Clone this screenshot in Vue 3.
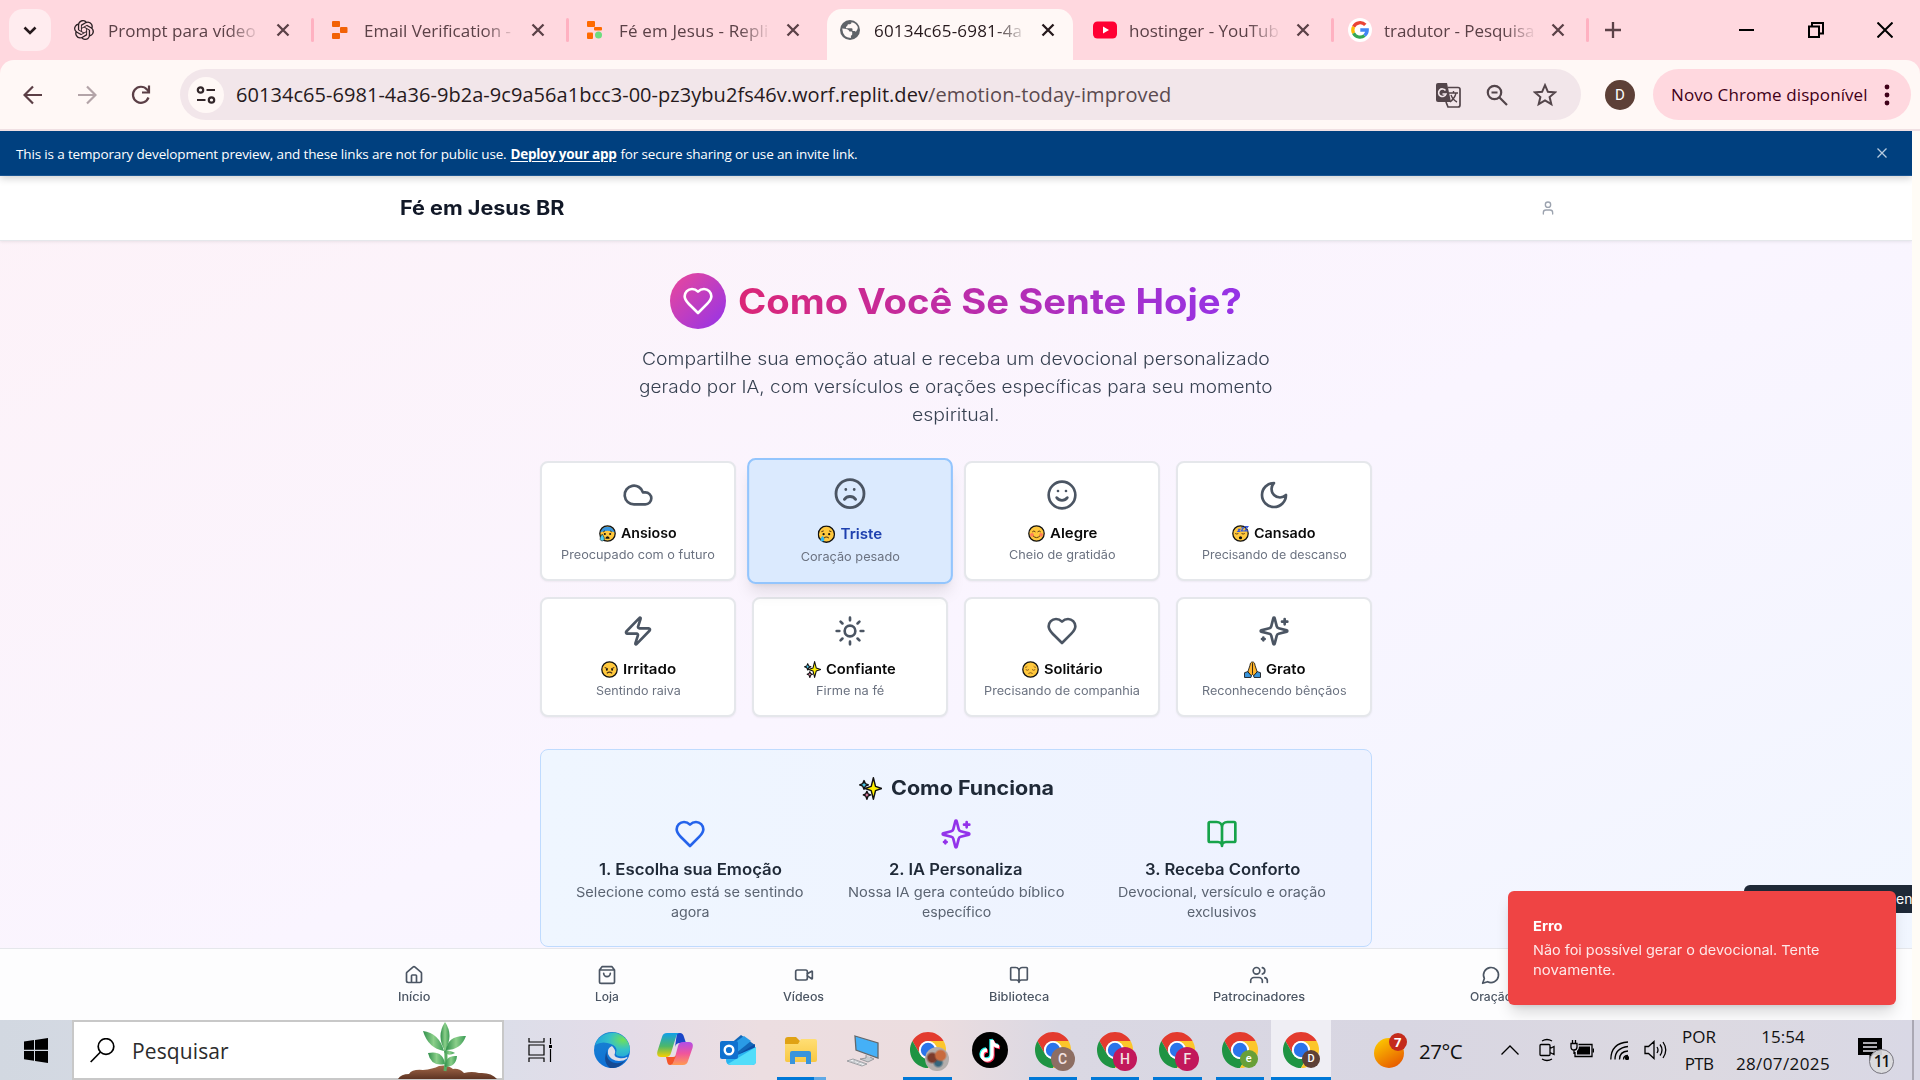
<script setup>
// Letter-spaces a run of text to a given width; with .wide the glyphs are widened instead.
const vFit = {
  mounted(el, { value, modifiers }) {
    const natural = el.offsetWidth
    if (modifiers.wide) {
      el.style.width = `${value}px`
      el.style.transform = `scaleX(${(value / natural).toFixed(4)})`
    } else {
      el.style.letterSpacing = `${((value - natural) / el.textContent.trim().length).toFixed(3)}px`
    }
  },
}

const tabs = [
  { icon: 'gpt', title: 'Prompt para vídeo', w: 148 },
  { icon: 'replit', title: 'Email Verification -', w: 147 },
  { icon: 'replit-live', title: 'Fé em Jesus - Repli', w: 150, quiet: true },
  { icon: 'globe', title: '60134c65-6981-4a', w: 148, active: true },
  { icon: 'youtube', title: 'hostinger - YouTub', w: 150 },
  { icon: 'google', title: 'tradutor - Pesquisa', w: 150 },
]
const emotions = [
  { icon: 'cloud', emoji: 'e-anxious', name: 'Ansioso', w: 56, desc: 'Preocupado com o futuro', dw: 154 },
  { icon: 'frown', emoji: 'e-sad', name: 'Triste', w: 40, desc: 'Coração pesado', dw: 95 },
  { icon: 'smile', emoji: 'e-happy', name: 'Alegre', w: 47, desc: 'Cheio de gratidão', dw: 107 },
  { icon: 'moon', emoji: 'e-sleep', name: 'Cansado', w: 62, desc: 'Precisando de descanso', dw: 145 },
  { icon: 'zap', emoji: 'e-angry', name: 'Irritado', w: 53, desc: 'Sentindo raiva', dw: 85 },
  { icon: 'sun', emoji: 'e-sparkles', name: 'Confiante', w: 70, desc: 'Firme na fé', dw: 68 },
  { icon: 'heart', emoji: 'e-lonely', name: 'Solitário', w: 59, desc: 'Precisando de companhia', dw: 156 },
  { icon: 'sparkles', emoji: 'e-pray', name: 'Grato', w: 39, desc: 'Reconhecendo bênçãos', dw: 145 },
]
const selected = 'Triste'
const steps = [
  { icon: 'heart', tone: 'blue', title: '1. Escolha sua Emoção', w: 183, lines: [['Selecione como está se sentindo', 228], ['agora', 39]] },
  { icon: 'sparkles', tone: 'purple', title: '2. IA Personaliza', w: 134, lines: [['Nossa IA gera conteúdo bíblico', 216], ['específico', 69]] },
  { icon: 'book', tone: 'green', title: '3. Receba Conforto', w: 155, lines: [['Devocional, versículo e oração', 208], ['exclusivos', 70]] },
]
const nav = [
  { icon: 'home', label: 'Início', w: 32 },
  { icon: 'bag', label: 'Loja', w: 24 },
  { icon: 'video', label: 'Vídeos', w: 41 },
  { icon: 'book', label: 'Biblioteca', w: 60 },
  { icon: 'users', label: 'Patrocinadores', w: 92 },
  { icon: 'message', label: 'Oração', w: 42 },
]
const apps = [
  { icon: 'edge' },
  { icon: 'copilot' },
  { icon: 'outlook' },
  { icon: 'folder', open: true, stacked: true },
  { icon: 'computer' },
  { icon: 'chrome', open: true, badge: ' ', tone: 'photo' },
  { icon: 'tiktok' },
  { icon: 'chrome', open: true, badge: 'C', tone: 'taupe' },
  { icon: 'chrome', open: true, badge: 'H', tone: 'magenta' },
  { icon: 'chrome', open: true, badge: 'F', tone: 'magenta' },
  { icon: 'chrome', open: true, badge: 'e', tone: 'lime small' },
  { icon: 'chrome', open: true, badge: 'D', tone: 'brown small', active: true },
]
</script>

<template>
  <div class="screen">
    <svg class="sprite" width="0" height="0">
      <defs>
        <radialGradient id="edgeGreen" cx=".8" cy=".3" r=".9"><stop offset="0" stop-color="#6fe05a" /><stop offset=".45" stop-color="#35c1c8" /><stop offset="1" stop-color="#1b9de2" /></radialGradient>
        <linearGradient id="edgeBlue" x1="0" y1="0" x2=".3" y2="1"><stop offset="0" stop-color="#1b86d0" /><stop offset="1" stop-color="#0d6fd6" /></linearGradient>
        <linearGradient id="copA" x1="0" y1="0" x2="0" y2="1"><stop offset="0" stop-color="#12a0e8" /><stop offset=".55" stop-color="#4cb76a" /><stop offset="1" stop-color="#f8d000" /></linearGradient>
        <linearGradient id="copB" x1="0" y1="0" x2="0" y2="1"><stop offset="0" stop-color="#b14ee8" /><stop offset=".5" stop-color="#f0559c" /><stop offset="1" stop-color="#ff9b52" /></linearGradient>
        <linearGradient id="folderG" x1="0" y1="0" x2="0" y2="1"><stop offset="0" stop-color="#ffde74" /><stop offset="1" stop-color="#f8c843" /></linearGradient>
        <linearGradient id="leaf" x1="0" y1="0" x2="1" y2="0"><stop offset="0" stop-color="#2f8f4b" /><stop offset=".5" stop-color="#8ccf8a" /><stop offset="1" stop-color="#3a9b55" /></linearGradient>
        <linearGradient id="soil" x1="0" y1="0" x2="0" y2="1"><stop offset="0" stop-color="#a5694a" /><stop offset="1" stop-color="#5d3423" /></linearGradient>
        <linearGradient id="sunG" x1="0" y1="0" x2=".6" y2="1"><stop offset="0" stop-color="#ffd400" /><stop offset="1" stop-color="#e85f00" /></linearGradient>
      </defs>
      <symbol id="cloud" viewBox="0 0 24 24"><path d="M17.5 19H9a7 7 0 1 1 6.71-9h1.79a4.5 4.5 0 1 1 0 9Z" /></symbol>
      <symbol id="frown" viewBox="0 0 24 24"><circle cx="12" cy="12" r="10" /><path d="M16 16s-1.5-2-4-2-4 2-4 2M9 9h.01M15 9h.01" /></symbol>
      <symbol id="smile" viewBox="0 0 24 24"><circle cx="12" cy="12" r="10" /><path d="M8 14s1.5 2 4 2 4-2 4-2M9 9h.01M15 9h.01" /></symbol>
      <symbol id="moon" viewBox="0 0 24 24"><path d="M12 3a6 6 0 0 0 9 9 9 9 0 1 1-9-9Z" /></symbol>
      <symbol id="zap" viewBox="0 0 24 24"><path d="M4 14a1 1 0 0 1-.78-1.63l9.9-10.2a.5.5 0 0 1 .86.46l-1.92 6.02A1 1 0 0 0 13 10h7a1 1 0 0 1 .78 1.63l-9.9 10.2a.5.5 0 0 1-.86-.46l1.92-6.02A1 1 0 0 0 11 14z" /></symbol>
      <symbol id="sun" viewBox="0 0 24 24"><circle cx="12" cy="12" r="4" /><path d="M12 2v2M12 20v2M4.93 4.93l1.41 1.41M17.66 17.66l1.41 1.41M2 12h2M20 12h2M6.34 17.66l-1.41 1.41M19.07 4.93l-1.41 1.41" /></symbol>
      <symbol id="heart" viewBox="0 0 24 24"><path d="M19 14c1.49-1.46 3-3.21 3-5.5A5.5 5.5 0 0 0 16.5 3c-1.76 0-3 .5-4.5 2-1.5-1.5-2.74-2-4.5-2A5.5 5.5 0 0 0 2 8.5c0 2.3 1.5 4.05 3 5.5l7 7Z" /></symbol>
      <symbol id="sparkles" viewBox="0 0 24 24"><path d="M9.937 15.5A2 2 0 0 0 8.5 14.063l-6.135-1.582a.5.5 0 0 1 0-.962L8.5 9.936A2 2 0 0 0 9.937 8.5l1.582-6.135a.5.5 0 0 1 .963 0L14.063 8.5A2 2 0 0 0 15.5 9.937l6.135 1.581a.5.5 0 0 1 0 .964L15.5 14.063a2 2 0 0 0-1.437 1.437l-1.582 6.135a.5.5 0 0 1-.963 0zM20 3v4M22 5h-4M4 17v2M5 18H3" /></symbol>
      <symbol id="book" viewBox="0 0 24 24"><path d="M12 7v14M3 18a1 1 0 0 1-1-1V4a1 1 0 0 1 1-1h5a4 4 0 0 1 4 4 4 4 0 0 1 4-4h5a1 1 0 0 1 1 1v13a1 1 0 0 1-1 1h-6a3 3 0 0 0-3 3 3 3 0 0 0-3-3z" /></symbol>
      <symbol id="home" viewBox="0 0 24 24"><path d="M15 21v-8a1 1 0 0 0-1-1h-4a1 1 0 0 0-1 1v8M3 10a2 2 0 0 1 .709-1.528l7-5.999a2 2 0 0 1 2.582 0l7 5.999A2 2 0 0 1 21 10v9a2 2 0 0 1-2 2H5a2 2 0 0 1-2-2z" /></symbol>
      <symbol id="bag" viewBox="0 0 24 24"><path d="M6 2 3 6v14a2 2 0 0 0 2 2h14a2 2 0 0 0 2-2V6l-3-4ZM3 6h18M16 10a4 4 0 0 1-8 0" /></symbol>
      <symbol id="video" viewBox="0 0 24 24"><path d="m16 13 5.223 3.482a.5.5 0 0 0 .777-.416V7.87a.5.5 0 0 0-.752-.432L16 10.5" /><rect x="2" y="6" width="14" height="12" rx="2" /></symbol>
      <symbol id="users" viewBox="0 0 24 24"><path d="M16 21v-2a4 4 0 0 0-4-4H6a4 4 0 0 0-4 4v2M22 21v-2a4 4 0 0 0-3-3.87M16 3.13a4 4 0 0 1 0 7.75" /><circle cx="9" cy="7" r="4" /></symbol>
      <symbol id="message" viewBox="0 0 24 24"><path d="M7.9 20A9 9 0 1 0 4 16.1L2 22Z" /></symbol>
      <symbol id="user" viewBox="0 0 24 24"><path d="M19 21v-2a4 4 0 0 0-4-4H9a4 4 0 0 0-4 4v2" /><circle cx="12" cy="7" r="4" /></symbol>

      <symbol id="e-anxious" viewBox="0 0 32 32"><circle cx="16" cy="16" r="14.5" fill="#ffc83d" /><path d="M2 14A14.5 14.5 0 0 1 30 14Q16 8 2 14z" fill="#3a96dd" /><circle cx="16" cy="16" r="14.5" fill="none" stroke="#111" stroke-width="2.4" /><path d="M8 13l3-2M24 13l-3-2" stroke="#111" stroke-width="1.6" /><circle cx="11" cy="17" r="1.9" fill="#111" /><circle cx="21" cy="17" r="1.9" fill="#111" /><path d="M12 26q0-5 4-5t4 5z" fill="#111" /><path d="M6 17q-5 7-4 10 1 3 4 3t4-3q1-3-4-10z" fill="#50d0f5" stroke="#111" stroke-width="1" /></symbol>
      <symbol id="e-sad" viewBox="0 0 32 32"><circle cx="16" cy="16" r="14.5" fill="#ffc83d" stroke="#111" stroke-width="2.4" /><path d="M7 12l4-2M25 12l-4-2M11.500 23q4.500-4 9 0" fill="none" stroke="#5a3a10" stroke-width="1.8" /><circle cx="11" cy="16" r="2" fill="#111" /><circle cx="21" cy="16" r="2" fill="#111" /><path d="M9 19q-4 5-3.500 7 .5 3 3.500 3t3.500-3Q13 24 9 19z" fill="#32b5f0" /></symbol>
      <symbol id="e-happy" viewBox="0 0 32 32"><circle cx="16" cy="16" r="14.500" fill="#ffc83d" stroke="#111" stroke-width="2.400" /><circle cx="7.500" cy="18.500" r="3.500" fill="#ff7b5a" /><circle cx="24.500" cy="18.500" r="3.500" fill="#ff7b5a" /><path d="M8 13q3-3.500 6 0M18 13q3-3.500 6 0M9.500 20.500q6.500 6.500 13 0" fill="none" stroke="#5a3a10" stroke-width="1.800" /></symbol>
      <symbol id="e-sleep" viewBox="0 0 32 32"><circle cx="16" cy="16" r="14.500" fill="#ffc83d" stroke="#111" stroke-width="2.400" /><path d="M6 16q3 2 6 0M18 16q3 2 6 0" fill="none" stroke="#5a3a10" stroke-width="1.800" /><circle cx="16" cy="24" r="3" fill="#111" /><path d="M11 8h4l-4 4h4M17 5h5l-5 6h5M24 3h6l-6 8h6" fill="none" stroke="#3157e0" stroke-width="2" /></symbol>
      <symbol id="e-angry" viewBox="0 0 32 32"><circle cx="16" cy="16" r="14.500" fill="#ffc83d" stroke="#111" stroke-width="2.400" /><path d="M7 12l6 3M25 12l-6 3M11 23q5-4 10 0" fill="none" stroke="#4a3010" stroke-width="2" /><circle cx="11" cy="16.500" r="1.800" fill="#111" /><circle cx="21" cy="16.500" r="1.800" fill="#111" /></symbol>
      <symbol id="e-lonely" viewBox="0 0 32 32"><circle cx="16" cy="16" r="14.500" fill="#ffc83d" stroke="#111" stroke-width="2.400" /><path d="M6 12q3-.5 4-2M26 12q-3-.5-4-2M7 16q3 3 6 0M19 16q3 3 6 0M12 23.500q4-3 8 0" fill="none" stroke="#8a5a18" stroke-width="1.800" /></symbol>
      <symbol id="e-sparkles" viewBox="0 0 32 32"><g stroke="#111" stroke-width="2" stroke-linejoin="round"><path d="M7 5l1.800 4.200L13 11l-4.200 1.800L7 17l-1.800-4.200L1 11l4.200-1.800z" fill="#50d0f5" /><path d="M11 20l1.600 3.400L16 25l-3.400 1.600L11 31l-1.600-4.400L6 25l3.400-1.600z" fill="#f58ab5" /><path d="M20 1l3 12 8.500 3L23 19l-3 12-3-12-8.500-3 8.500-3z" fill="#fff100" /></g></symbol>
      <symbol id="e-pray" viewBox="0 0 32 32"><g stroke="#111" stroke-width="1.600" stroke-linejoin="round"><path d="M14.500 2q-3 1-3.500 7l-4 12 6 7 3-3 3 3 6-7-4-12q-.5-6-3.500-7z" fill="#ffb52e" /><path d="M16 4v20" /><path d="M1 22l6-2 7 8-1 3H1zM31 22l-6-2-7 8 1 3h12z" fill="#3a96dd" /></g></symbol>

      <symbol id="gpt" viewBox="0 0 24 24"><path fill="#2b2024" d="M22.282 9.821a5.985 5.985 0 0 0-.516-4.910 6.046 6.046 0 0 0-6.510-2.900A6.065 6.065 0 0 0 4.981 4.180a5.985 5.985 0 0 0-3.998 2.900 6.046 6.046 0 0 0 .743 7.097 5.980 5.980 0 0 0 .510 4.911 6.051 6.051 0 0 0 6.515 2.900A5.985 5.985 0 0 0 13.260 24a6.056 6.056 0 0 0 5.772-4.206 5.990 5.990 0 0 0 3.997-2.900 6.056 6.056 0 0 0-.747-7.073zM13.260 22.430a4.476 4.476 0 0 1-2.876-1.040l.141-.081 4.779-2.758a.795.795 0 0 0 .392-.681v-6.737l2.020 1.168a.071.071 0 0 1 .038.052v5.583a4.504 4.504 0 0 1-4.494 4.494zM3.600 18.304a4.470 4.470 0 0 1-.535-3.014l.142.085 4.783 2.759a.771.771 0 0 0 .780 0l5.843-3.369v2.332a.080.080 0 0 1-.033.062L9.740 19.950a4.500 4.500 0 0 1-6.140-1.646zM2.340 7.896a4.485 4.485 0 0 1 2.366-1.973V11.600a.766.766 0 0 0 .388.676l5.815 3.355-2.020 1.168a.076.076 0 0 1-.071 0l-4.830-2.786A4.504 4.504 0 0 1 2.340 7.872zm16.597 3.855l-5.833-3.387L15.119 7.200a.076.076 0 0 1 .071 0l4.830 2.791a4.494 4.494 0 0 1-.676 8.105v-5.678a.790.790 0 0 0-.407-.667zm2.010-3.023l-.141-.085-4.774-2.782a.776.776 0 0 0-.785 0L9.409 9.230V6.897a.066.066 0 0 1 .028-.061l4.830-2.787a4.500 4.500 0 0 1 6.680 4.660zm-12.640 4.135l-2.020-1.164a.080.080 0 0 1-.038-.057V6.075a4.500 4.500 0 0 1 7.375-3.453l-.142.080L8.704 5.460a.795.795 0 0 0-.393.681zm1.097-2.365l2.602-1.500 2.607 1.500v2.999l-2.597 1.500-2.607-1.500z" /></symbol>
      <symbol id="replit" viewBox="0 0 20 20"><g fill="#f26207"><rect x="2" y="1" width="8" height="6" rx="1" /><rect x="10" y="7" width="7.500" height="6" rx="1" /><rect x="2" y="13" width="8" height="6" rx="1" /></g></symbol>
      <symbol id="replit-live" viewBox="0 0 20 20"><g fill="#ff6a00"><rect x="2" y="1" width="8" height="6" rx="1" /><rect x="9" y="7" width="8" height="3.500" rx="1" /><rect x="2" y="12.500" width="6" height="6.500" rx="1" /></g><circle cx="13.500" cy="15" r="3.500" fill="#6ddc7f" /></symbol>
      <symbol id="globe" viewBox="0 0 20 20"><circle cx="10" cy="10" r="10" fill="#5f6368" /><path d="M2.200 8.500q3 .2 5 .8 2 .7 2.200 2.200h2q.8.200.8 1v2q-.3 1-1.300 1.200v2.200Q3 18 2.200 8.500zM11.500 2.300q.2 1.700-1.500 2H8.200q-.8.300-.8 1.200T6 6.700v1.500h5.500q1 .1 1 1v1.800h2q1 .2 1.300 1 2.500-2.600 2-5Q16 3 11.500 2.300z" fill="#fff8f6" /></symbol>
      <symbol id="youtube" viewBox="0 0 24 20"><rect y="1.500" width="24" height="17" rx="4.500" fill="#f03" /><path d="M10 6.500v7l6-3.500z" fill="#fff" /></symbol>
      <symbol id="google" viewBox="0 0 24 24"><circle cx="12" cy="12" r="12" fill="#fff" /><g fill="none" stroke-width="3.300"><path d="M17.300 6.900A7.200 7.200 0 0 0 5.600 8.800" stroke="#ea4335" /><path d="M5.600 8.800a7.200 7.200 0 0 0 0 6.400" stroke="#fbbc05" /><path d="M5.600 15.200a7.200 7.200 0 0 0 11 2.300" stroke="#34a853" /><path d="M16.600 17.500A7.200 7.200 0 0 0 19.200 12H12.300" stroke="#4285f4" /></g></symbol>

      <symbol id="chrome" viewBox="0 0 48 48"><path d="M24 12h20.780A24 24 0 0 0 3.220 12L13.600 30A12 12 0 0 1 24 12z" fill="#e33b2e" /><path d="M3.220 12A24 24 0 0 0 24 48l10.390-18a12 12 0 0 1-20.780 0z" fill="#1f9443" /><path d="M24 12h20.780A24 24 0 0 1 24 48l10.390-18A12 12 0 0 0 24 12z" fill="#fcc62b" /><circle cx="24" cy="24" r="12" fill="#fff" /><circle cx="24" cy="24" r="9.600" fill="#2a74ea" /></symbol>
      <symbol id="edge" viewBox="0 0 36 36"><circle cx="18" cy="18" r="18" fill="url(#edgeBlue)" /><path d="M1 13A18 18 0 0 1 36 17c0 5-4 7.500-8 7.500-4.500 0-7-1.500-6-4 1.500-3 0-6.500-5-8.500Q8 8.500 1 13z" fill="url(#edgeGreen)" /><path d="M13 18q-2 9 6 12.500 7 2 12-2Q25 37 16 36 8 30 13 18z" fill="#154b94" /><path d="M18 14q-5 2-4 8 3 7 11 7 5 0 8-2.500 1-.8 0-1.500-4 2-8 1-6-1-4-5 1-3-3-7z" fill="#dfdde9" /></symbol>
      <symbol id="copilot" viewBox="0 0 36 36"><path d="M20 1h3q3 0 4 4l2 6h-6q-4 0-5 4z" fill="#1b46c8" /><path d="M10 1h13q-3 0-4 4l-5 16q-1 4-5 4H4q-5 0-3.500-6L5 5q1-4 5-4z" fill="url(#copA)" /><path d="M26 33H13q3 0 4-4l4-15q1-4 5-4h6q5 0 3.500 6L31 29q-1 4-5 4z" fill="url(#copB)" /><path d="M9 25h7q3 0 4-4l-3 8q-1 4-4 4-2 0-2.500-2z" fill="#f4562a" /></symbol>
      <symbol id="outlook" viewBox="0 0 36 36"><path d="M9 13L21 3l14 10-14 13-12-2z" fill="#1266b8" /><path d="M11 13L24 4l7 5-16 13z" fill="#2a9be6" /><path d="M14 25L35 12v6L16 30z" fill="#0b4ea6" /><path d="M7 21l8 3 21-9v14q0 4-4 4H11q-5 0-5-5z" fill="#29b4f0" /><path d="M8 32L36 15v14q0 4-4 4H11z" fill="#52ddfa" /><rect y="9" width="18" height="18" rx="2" fill="#1071cf" /><circle cx="9" cy="18" r="4.300" fill="none" stroke="#fff" stroke-width="2.400" /></symbol>
      <symbol id="folder" viewBox="0 0 36 36"><path d="M2 8q0-3 3-3h8l4 4v5H2z" fill="#e0a214" /><path d="M2 12h13l3-5h14q2 0 2 2v19q0 2-2 2H4q-2 0-2-2z" fill="url(#folderG)" /><path d="M7 21q0-2 2-2h17q2 0 2 2v11h-5v-7H12v7H7z" fill="#3994dc" /></symbol>
      <symbol id="computer" viewBox="0 0 36 36"><path d="M9 4l23 7v15L10 18z" fill="#45b0f7" stroke="#63686c" stroke-width="1.300" /><path d="M20 23v3l-6 1 8 3 6-3-4-2" fill="#c8ccd0" stroke="#7c8084" stroke-width=".7" /><path d="M1 29l6-2 14 5-5 2z" fill="#eef0f2" stroke="#8b8f94" stroke-width=".8" /><path d="M4 29l12 4M7 28l12 4M6 31l3-2M11 32l3-2" stroke="#a5a8ac" stroke-width=".6" /></symbol>
      <symbol id="tiktok" viewBox="0 0 36 36"><circle cx="18" cy="18" r="18" fill="#000" /><g fill="none" stroke-width="3.400"><path d="M19 7v15a5 5 0 1 1-5-5M19 7q1 6 7 6.500" stroke="#25f4ee" /><path d="M21 9v15a5 5 0 1 1-5-5M21 9q1 6 7 6.500" stroke="#fe2c55" /><path d="M20 8v15a5 5 0 1 1-5-5M20 8q1 6 7 6.500" stroke="#fff" /></g></symbol>
    </svg>

    <header class="tabstrip">
      <div class="tab-search"><svg width="20" height="20" viewBox="0 0 20 20"><path d="M4.500 7.500L10 13l5.500-5.500" fill="none" stroke="#26191c" stroke-width="2.600" /></svg></div>
      <div class="tabs">
        <div v-for="t in tabs" :key="t.title" class="tab" :class="{ active: t.active, quiet: t.quiet }">
          <svg class="favicon" :class="t.icon"><use :href="'#' + t.icon" /></svg>
          <div class="tab-title"><span v-fit="t.w">{{ t.title }}</span></div>
          <svg class="tab-close" width="14" height="14" viewBox="0 0 14 14"><path d="M1.500 1.500l11 11M12.500 1.500l-11 11" /></svg>
        </div>
      </div>
      <svg class="new-tab" width="16" height="16" viewBox="0 0 16 16"><path d="M8 0v16M0 8h16" /></svg>
      <div class="window-controls">
        <svg width="16" height="16" viewBox="0 0 16 16"><path d="M0 8h15" /></svg>
        <svg width="16" height="16" viewBox="0 0 16 16"><path d="M1 4.500h10v10.500H1zM4 4V1h11v10.500h-4" /></svg>
        <svg width="16" height="16" viewBox="0 0 16 16"><path d="M.5 .5l15 15M15.500 .5l-15 15" /></svg>
      </div>
    </header>

    <div class="toolbar-wrap">
      <div class="toolbar">
        <div class="nav-buttons">
          <svg width="20" height="20" viewBox="0 0 20 20"><path d="M19 10H2M10 1.500L1.500 10l8.500 8.500" /></svg>
          <svg class="dim" width="20" height="20" viewBox="0 0 20 20"><path d="M1 10h17M10 1.500l8.500 8.500-8.500 8.500" /></svg>
          <svg width="20" height="20" viewBox="0 0 20 20"><path d="M17.500 12.500A8 8 0 1 1 16 4.500l2 2M18 .5v7h-7" /></svg>
        </div>
        <div class="omnibox">
          <div class="site-info"><svg width="20" height="20" viewBox="0 0 20 20"><g fill="none" stroke="#33272a" stroke-width="2.200"><circle cx="4.500" cy="5" r="2.700" /><path d="M10.500 5H19M1 15h8.500" /><circle cx="15.500" cy="15" r="2.700" /></g></svg></div>
          <div class="url"><span v-fit="692">60134c65-6981-4a36-9b2a-9c9a56a1bcc3-00-pz3ybu2fs46v.worf.replit.dev</span><span v-fit="243" class="path">/emotion-today-improved</span></div>
          <svg class="omni-icon" width="26" height="26" viewBox="0 0 26 26"><path d="M3 1h9l4 19H3q-2 0-2-2V3q0-2 2-2z" fill="#53454a" /><path d="M13 5.500h10q2 0 2 2V23q0 2-2 2H13l-2-5" fill="none" stroke="#53454a" stroke-width="1.700" /><path d="M10.500 8.500A3.800 3.800 0 1 0 11 12H7.500" fill="none" stroke="#f2e6ea" stroke-width="1.600" /><path d="M14 11h9M18.500 9v2M21 11q-1 5-6 9M16 13q2 5 6 7" fill="none" stroke="#53454a" stroke-width="1.400" /></svg>
          <svg class="omni-icon" width="22" height="22" viewBox="0 0 22 22"><g fill="none" stroke="#53454a" stroke-width="2.200"><circle cx="8.500" cy="8.500" r="6.700" /><path d="M13.500 13.500L21 21M5.500 8.500h6" /></g></svg>
          <svg class="omni-icon" width="24" height="24" viewBox="0 0 24 24"><path d="M12 2.200l2.900 6.600 7.100.6-5.400 4.700 1.700 7L12 17.300l-6.300 3.800 1.700-7L2 9.400l7.100-.6z" fill="none" stroke="#53454a" stroke-width="2" /></svg>
        </div>
        <div class="avatar">D</div>
        <div class="update"><span v-fit="197">Novo Chrome disponível</span><svg width="6" height="22" viewBox="0 0 6 22" fill="#3f0018"><circle cx="3" cy="3" r="2.400" /><circle cx="3" cy="11" r="2.400" /><circle cx="3" cy="19" r="2.400" /></svg></div>
      </div>
    </div>

    <div class="viewport">
      <div class="page">
        <div class="preview-bar">
          <p><span v-fit="491">This is a temporary development preview, and these links are not for public use.</span><a v-fit="106">Deploy your app</a><span v-fit="237">for secure sharing or use an invite link.</span></p>
          <svg width="10" height="10" viewBox="0 0 10 10"><path d="M.5 .5l9 9M9.500 .5l-9 9" /></svg>
        </div>
        <div class="app-header">
          <strong v-fit.wide="164">Fé em Jesus BR</strong>
          <svg class="line-icon" width="16" height="16"><use href="#user" /></svg>
        </div>
        <main class="content">
          <div class="hero">
            <div class="hero-icon"><svg class="line-icon" width="32" height="32"><use href="#heart" /></svg></div>
            <h1 v-fit.wide="504">Como Você Se Sente Hoje?</h1>
          </div>
          <p class="lead">
            <span v-fit.wide="628">Compartilhe sua emoção atual e receba um devocional personalizado</span>
            <span v-fit.wide="634">gerado por IA, com versículos e orações específicas para seu momento</span>
            <span v-fit.wide="88">espiritual.</span>
          </p>
          <div class="grid">
            <div v-for="e in emotions" :key="e.name" class="card" :class="{ active: e.name === selected }">
              <svg class="line-icon" width="32" height="32"><use :href="'#' + e.icon" /></svg>
              <div class="card-title"><svg width="17" height="17"><use :href="'#' + e.emoji" /></svg><span v-fit.wide="e.w">{{ e.name }}</span></div>
              <div class="card-desc"><span v-fit.wide="e.dw">{{ e.desc }}</span></div>
            </div>
          </div>
          <section class="how">
            <h2><svg width="23" height="23"><use href="#e-sparkles" /></svg><span v-fit.wide="163">Como Funciona</span></h2>
            <div class="steps">
              <div v-for="s in steps" :key="s.title" class="step">
                <svg class="line-icon" :class="s.tone" width="32" height="32"><use :href="'#' + s.icon" /></svg>
                <h3><span v-fit.wide="s.w">{{ s.title }}</span></h3>
                <p v-for="l in s.lines" :key="l[0]"><span v-fit.wide="l[1]">{{ l[0] }}</span></p>
              </div>
            </div>
          </section>
        </main>
        <nav class="bottom-nav">
          <div class="nav-inner">
            <div v-for="n in nav" :key="n.label" class="nav-item">
              <svg class="line-icon" width="20" height="20"><use :href="'#' + n.icon" /></svg>
              <span v-fit.wide="n.w">{{ n.label }}</span>
            </div>
          </div>
        </nav>
        <div class="tooltip">en</div>
        <div class="toast">
          <b v-fit.wide="30">Erro</b>
          <p><span v-fit.wide="286">Não foi possível gerar o devocional. Tente</span></p>
          <p><span v-fit.wide="83">novamente.</span></p>
        </div>
      </div>
    </div>

    <footer class="taskbar">
      <div class="start"><svg width="24" height="25" viewBox="0 0 24 25"><path d="M0 3.400L10 2v9.800H0zM11 1.900L24 0v11.800H11zM0 12.900h10v9.800L0 21.300zM11 12.900h13V25l-13-2z" /></svg></div>
      <div class="search">
        <svg width="25" height="25" viewBox="0 0 25 25"><g fill="none" stroke="#000" stroke-width="1.700"><circle cx="16" cy="8.500" r="7.800" /><path d="M10.500 14L.7 24" /></g></svg>
        <span v-fit="97">Pesquisar</span>
        <svg class="plant" width="102" height="58" viewBox="0 0 102 58">
          <path d="M1 58q3-5 11-5 3-5 14-4 10-1 16-4 8-2 14 3 6-1 11 4 8-2 15 0 12-1 18 6z" fill="url(#soil)" />
          <path d="M48 50q2-12 0-28" fill="none" stroke="#58ad62" stroke-width="3" />
          <g fill="url(#leaf)"><path d="M48 1q9 13 0 29-9-15 0-29z" /><path d="M26 10q16 2 21 20-16-3-21-20z" /><path d="M69 15q-18-1-20 14 15 0 20-14z" /><path d="M31 32q15-3 17 11-14 3-17-11z" /><path d="M60 35q-12-1-12 11 11 0 12-11z" /><path d="M58 32q-10-5-11-1 4 5 11 1z" /></g>
        </svg>
      </div>
      <div class="task-view"><svg width="25" height="24" viewBox="0 0 25 24"><path d="M1 0v4h15V0M1 7h15v10H1zM1 24v-4h15v4M22.500 0v6M22.500 11v13" fill="none" stroke="#000" stroke-width="1.200" /><rect x="21" y="7" width="3" height="3" /></svg></div>
      <div class="apps">
        <div v-for="(a, i) in apps" :key="i" class="app" :class="{ open: a.open, active: a.active, stacked: a.stacked }">
          <svg width="36" height="36"><use :href="'#' + a.icon" /></svg>
          <span v-if="a.badge" class="badge" :class="a.tone">{{ a.badge }}</span>
        </div>
      </div>
      <div class="weather">
        <svg width="38" height="38" viewBox="0 0 38 38"><circle cx="17" cy="22" r="15" fill="url(#sunG)" /><circle cx="26" cy="11" r="9" fill="#c42b1c" /></svg>
        <i>7</i><span v-fit="43">27°C</span>
      </div>
      <div class="tray">
        <svg width="18" height="10" viewBox="0 0 18 10"><path d="M.5 9.500L9 1l8.500 8.500" /></svg>
        <svg width="16" height="24" viewBox="0 0 16 24"><path d="M1 7.500q0-1 1-1h8q1 0 1 1v9q0 1-1 1H2q-1 0-1-1zM11 10.500l4-2v8l-4-2M3 3q5-3 10 0M3 21q5 3 10 0" /></svg>
        <svg width="24" height="20" viewBox="0 0 24 20"><path d="M8.500 4.500H22v12H5v-4.500M23.500 8.500v4M1 3.500h6V7q0 3-3 3T1 7zM2.500 0v3M5.500 0v3M4 10v4" /><path d="M9 6.500h11v8H7v-3.500q2-1.500 2-4.500z" fill="#000" stroke="none" /></svg>
        <svg width="19" height="19" viewBox="0 0 19 19"><path d="M.8 18.500Q1 2 18 1M5 18.500Q5 7 18 5.500M9.500 18.500q0-8 8.500-8.500M13.500 18.500q0-4 4.500-4" /><circle cx="17" cy="17" r="1.500" fill="#000" /></svg>
        <svg width="23" height="20" viewBox="0 0 23 20"><path d="M1 6.500h3.500L10 1.500v17l-5.500-5H1zM13 7q2 3 0 6M16 4.500q4 5.500 0 11M19 2q5.500 8 0 16" /></svg>
      </div>
      <div class="lang"><span v-fit="34">POR</span><span v-fit="29">PTB</span></div>
      <div class="clock"><span v-fit="43">15:54</span><span v-fit="94">28/07/2025</span></div>
      <div class="notice">
        <svg width="25" height="24" viewBox="0 0 25 24"><path d="M0 0h24v17H15l-3.500 6.500V17H0z" /><path d="M5 5h14M5 9h14M5 13h14" stroke="#e5e3ec" stroke-width="1.300" /></svg>
        <span>11</span>
      </div>
    </footer>
  </div>
</template>

<style>
body { margin: 0; overflow: hidden; }
</style>

<style scoped>
* { box-sizing: border-box; margin: 0; }
.screen { width: 1920px; height: 1080px; display: flex; flex-direction: column; overflow: hidden; font-family: "Open Sans", "Noto Sans", sans-serif; background: #fff8f6; }
.sprite { position: absolute; }
svg { flex: none; display: block; }
span, b, strong, a { white-space: nowrap; }

.tabstrip { height: 60px; background: #ffd8df; display: flex; align-items: center; padding-left: 9px; flex: none; }
.tab-search { width: 42px; height: 42px; border-radius: 14px; background: #ffecef; display: flex; align-items: center; justify-content: center; margin-right: 6px; }
.tabs { display: flex; height: 60px; }
.tab { width: 255px; padding: 0 22px 0 17px; display: flex; align-items: center; position: relative; color: #5b4147; }
.tab::after { content: ""; position: absolute; right: -2px; top: 18px; width: 3px; height: 24px; border-radius: 2px; background: #ffb1c1; }
.tab.active::after, .tab.quiet::after { display: none; }
.tab.active { color: #26191c; z-index: 1; }
.tab.active::before { content: ""; position: absolute; inset: 9px 4px 0 5px; background: #fff8f6; border-radius: 15px 15px 0 0; z-index: -1; }
.favicon { width: 20px; height: 20px; }
.tab + .tab .favicon { margin-left: 1px; }
.favicon.youtube { width: 24px; margin: 0 -2px; }
.tab .favicon.google { width: 24px; height: 24px; margin: 0 -2px 0 -1px; }
.tab .favicon.youtube { margin: 0 -2px 0 -1px; }
.tab-title { width: 150px; margin-left: 14px; overflow: hidden; font-size: 17px; line-height: 26px; padding-top: 2px; white-space: nowrap; -webkit-mask-image: linear-gradient(90deg, #000 80%, transparent 102%); mask-image: linear-gradient(90deg, #000 80%, transparent 102%); }
.tab-title span { display: inline-block; }
.tab-close { margin-left: auto; stroke: currentColor; stroke-width: 2.3; }
.new-tab { stroke: #5b4147; stroke-width: 2.300; margin-left: 18px; }
.window-controls { margin-left: auto; display: flex; gap: 53px; padding-right: 27px; }
.window-controls svg { fill: none; stroke: #000; stroke-width: 2; }

.toolbar-wrap { height: 71px; flex: none; background: #ffd8df; }
.toolbar { height: 71px; background: #fff8f6; border-radius: 14px 14px 0 0; border-bottom: 2px solid #f0e0e3; display: flex; align-items: center; padding: 0 9px 0 23px; }
.nav-buttons { display: flex; gap: 34px; width: 157px; }
.nav-buttons svg { fill: none; stroke: #5b3f46; stroke-width: 2.200; }
.nav-buttons .dim { stroke: #b3a4a8; }
.omnibox { width: 1401px; height: 51px; border-radius: 26px; background: #f2e6ea; display: flex; align-items: center; padding: 0 24px 0 8px; }
.site-info { width: 36px; height: 36px; border-radius: 50%; background: #fff8f6; display: flex; align-items: center; justify-content: center; }
.url { flex: 1; margin-left: 12px; font-size: 20px; color: #26191c; white-space: nowrap; display: flex; }
.url .path { color: #5b4a4f; }
.omni-icon + .omni-icon { margin-left: 25px; }
.avatar { width: 30px; height: 30px; border-radius: 50%; background: #5d4037; color: #fff; font: 15px/30px Roboto, sans-serif; text-align: center; margin-left: 24px; }
.update { width: 258px; height: 51px; margin-left: 18px; border-radius: 26px; background: #ffd8df; color: #3f0018; font-size: 17px; display: flex; align-items: center; justify-content: space-between; padding: 0 21px 0 18px; }

.viewport { height: 889px; flex: none; background: #fffcf6; }
.page { width: 1912px; height: 889px; position: relative; overflow: hidden; display: flex; flex-direction: column; font-family: Inter, sans-serif; background: linear-gradient(to bottom right, #fdf2f8, #faf5ff 50%, #eff6ff) 0 45px / 100% 900px no-repeat; }
.page strong, .page h1, .lead span, .card span, .how span, .nav-item span, .toast b, .toast span { display: inline-block; transform-origin: 0 50%; }
.preview-bar { height: 45px; flex: none; background: #00407f; border-bottom: 1px solid #1a5592; box-shadow: 0 2px 8px rgba(0, 0, 0, .2); position: relative; z-index: 2; display: flex; align-items: center; justify-content: space-between; padding: 0 25px 0 16px; color: #fff; font: 500 13.500px/20px "Open Sans", sans-serif; }
.preview-bar p { display: flex; gap: 4px; padding-top: 2px; }
.preview-bar a { font-weight: 700; text-decoration: underline; text-underline-offset: 2px; }
.preview-bar svg { stroke: #b8cce0; stroke-width: 1.300; }
.app-header { height: 65px; flex: none; background: #fff; border-bottom: 1px solid #e5e7eb; box-shadow: 0 1px 3px rgba(0, 0, 0, .08); display: flex; align-items: center; justify-content: space-between; padding: 0 356px 0 400px; font-size: 19.500px; color: #111827; z-index: 1; }
.line-icon { fill: none; stroke: currentColor; stroke-width: 2; stroke-linecap: round; stroke-linejoin: round; }
.app-header .line-icon { color: #9ca3af; }

.content { width: 832px; margin: 0 auto; padding-top: 32px; height: 707px; flex: none; }
.hero { display: flex; align-items: center; justify-content: center; gap: 12px; height: 56px; }
.hero-icon { width: 56px; height: 56px; flex: none; border-radius: 50%; background: linear-gradient(135deg, #ec4899, #9333ea); color: #fff; display: flex; align-items: center; justify-content: center; }
h1 { font-size: 35px; line-height: 44px; font-weight: 700; white-space: nowrap; background: linear-gradient(90deg, #db2777, #9333ea 94%); background-clip: text; -webkit-background-clip: text; color: transparent; }
.lead { margin-top: 16px; display: flex; flex-direction: column; align-items: center; font-size: 17.300px; line-height: 28px; font-weight: 300; color: #374151; }
.grid { margin-top: 32px; display: grid; grid-template-columns: repeat(4, 196px); grid-auto-rows: 120px; gap: 16px; }
.card { border: 2px solid #e5e7eb; border-radius: 8px; background: #fff; box-shadow: 0 1px 2px rgba(0, 0, 0, .05); padding-top: 16px; display: flex; flex-direction: column; align-items: center; color: #4b5563; }
.card.active { transform: scale(1.05); background: #dbeafe; border-color: #93c5fd; box-shadow: 0 10px 15px -3px rgba(0, 0, 0, .1), 0 4px 6px -4px rgba(0, 0, 0, .1); z-index: 1; }
.card-title { margin-top: 12px; height: 20px; display: flex; align-items: center; gap: 5px; font-size: 13.700px; line-height: 20px; font-weight: 600; color: #0a0a0a; }
.card.active .card-title { color: #1e40af; }
.card-desc { margin-top: 4px; font-size: 11.500px; line-height: 16px; color: #6b7280; }
.card-desc span { vertical-align: top; }
.how { margin-top: 32px; height: 198px; border: 1px solid #bfdbfe; border-radius: 8px; background: linear-gradient(90deg, #eff6ff, #eef2ff); padding: 24px; }
h2 { height: 28px; display: flex; align-items: center; justify-content: center; gap: 9px; font-size: 19.500px; font-weight: 700; color: #1f2937; }
.steps { margin-top: 16px; display: grid; grid-template-columns: repeat(3, 1fr); gap: 16px; }
.step { display: flex; flex-direction: column; align-items: center; font-size: 13.500px; line-height: 20px; color: #5b6472; }
.step h3 { margin-top: 8px; height: 24px; font-size: 15.700px; line-height: 23px; font-weight: 600; color: #1f2937; }
.step span { vertical-align: top; }
.step p { height: 20px; }
.blue { color: #2563eb; } .purple { color: #9333ea; } .green { color: #16a34a; }
.bottom-nav { height: 72px; flex: none; background: #fdfdfe; border-top: 1px solid #e5e7eb; }
.nav-inner { width: 1138px; margin-left: 386px; display: flex; justify-content: space-between; padding-top: 16px; }
.nav-item { padding: 0 12px; display: flex; flex-direction: column; align-items: center; gap: 4px; font-size: 11.500px; line-height: 16px; font-weight: 500; color: #4b5563; }
.tooltip { position: absolute; left: 1744px; top: 754px; width: 180px; height: 28px; border-radius: 6px; background: #1f2937; color: #fff; font-size: 14px; line-height: 27px; padding-left: 152px; }
.toast { position: absolute; left: 1508px; top: 760px; width: 388px; height: 114px; border-radius: 6px; background: #ef4444; box-shadow: 0 10px 15px -3px rgba(0, 0, 0, .15), 0 4px 6px -4px rgba(0, 0, 0, .15); padding: 25px; color: #fff; font-size: 13.700px; line-height: 20px; }
.toast b { height: 24px; vertical-align: top; }
.toast p { height: 20px; color: rgba(255, 255, 255, .88); }
.toast p span { vertical-align: top; }

.taskbar { height: 60px; flex: none; display: flex; position: relative; background: linear-gradient(90deg, #d2d8e1 0, #dcdee9 500px, #e4dce8 630px, #ecdee1 760px, #ecdddf 930px, #dad8e3 1060px, #d8d6e2 1400px, #dcd9e1 1700px, #d9d8e5 1912px); color: #111; }
.taskbar::after { content: ""; position: absolute; left: 1912px; width: 2px; height: 60px; background: #aaa8b3; }
.start { width: 72px; padding: 18px 0 0 24px; }
.search { width: 432px; height: 60px; border: 2px solid #c8c8c8; background: #fff; display: flex; align-items: center; padding-left: 16px; font-size: 21px; color: #2b2b2b; }
.search > span { margin: 2px 0 0 17px; }
.search .plant { margin-left: auto; margin-right: 3px; }
.task-view { padding: 18px 0 0 24px; width: 76px; }
.apps { display: flex; width: 753px; }
.app { width: 63.200px; height: 60px; flex: none; display: flex; align-items: center; justify-content: center; position: relative; }
.app:nth-child(n + 7) { width: 62.400px; }
.app.open::after { content: ""; position: absolute; bottom: 0; left: 7px; right: 7px; height: 3px; background: #0078d7; }
.app.stacked::after { background: linear-gradient(90deg, #0078d7 75%, #5fa9e6 75%); }
.app.active:nth-child(n + 7) { background: #efeef4; width: 60px; }
.app.active::after { left: 0; right: 0; }
.badge { position: absolute; left: 29px; top: 27px; width: 24px; height: 24px; border-radius: 50%; color: #f3e3e3; text-align: center; font: 500 14px/24px Roboto, sans-serif; }
.badge.small { width: 18px; height: 18px; left: 31px; top: 30px; font-size: 11px; line-height: 18px; color: #fff; }
.taupe { background: #8d6e63; } .magenta { background: #c2185b; } .lime { background: #689f38; } .brown { background: #5d4037; }
.photo { background: radial-gradient(circle at 65% 35%, #c96b3e 0 20%, transparent 30%), radial-gradient(circle at 30% 45%, #7b3b2c 0 18%, transparent 30%), radial-gradient(circle at 55% 65%, #35657c 0 15%, transparent 28%), #b4aeac; }
.weather { position: relative; width: 96px; margin-left: 39px; padding-top: 9px; display: flex; font-size: 20.500px; }
.weather svg { margin-top: 2px; }
.weather i { position: absolute; left: 22px; top: 13px; font: 700 13px/18px "Open Sans", sans-serif; color: #fff; }
.weather span { margin: 8px 0 0 9px; }
.tray { position: absolute; left: 1501px; top: 0; height: 60px; display: flex; align-items: center; }
.tray svg { fill: none; stroke: #000; stroke-width: 1.300; }
.tray svg:nth-child(2) { margin-left: 20px; }
.tray svg:nth-child(3) { margin-left: 15px; }
.tray svg:nth-child(4) { margin-left: 16px; }
.tray svg:nth-child(5) { margin-left: 15px; }
.lang, .clock { position: absolute; top: 3px; display: flex; flex-direction: column; align-items: center; font-size: 17px; line-height: 27px; }
.lang { left: 1669px; width: 60px; }
.clock { left: 1723px; width: 120px; }
.notice { position: absolute; left: 1858px; top: 18px; }
.notice span { position: absolute; left: 11px; top: 11px; width: 25px; height: 25px; border-radius: 50%; background: rgba(218, 218, 222, .93); border: 1.500px solid #77757e; font-size: 15.500px; font-weight: 600; line-height: 22px; text-align: center; letter-spacing: -1px; }
</style>
